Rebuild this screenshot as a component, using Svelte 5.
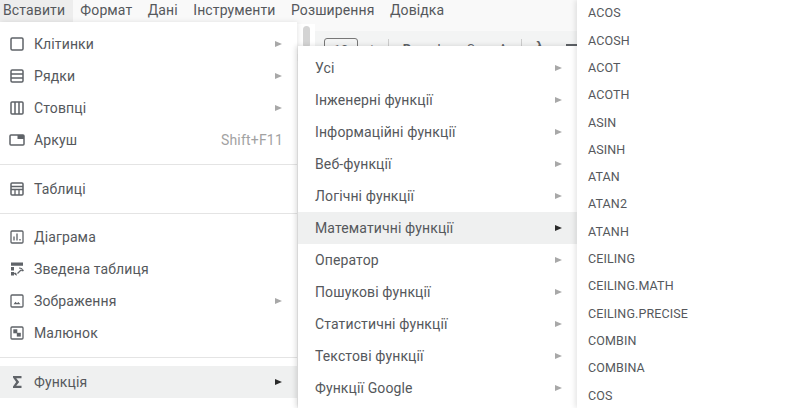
<script>
  const bar = ['Формат', 'Дані', 'Інструменти', 'Розширення', 'Довідка'];
  const groups = [
    [
      { label: 'Клітинки', icon: 'cell', sub: true },
      { label: 'Рядки', icon: 'rows', sub: true },
      { label: 'Стовпці', icon: 'cols', sub: true },
      { label: 'Аркуш', icon: 'sheet', key: 'Shift+F11' }
    ],
    [{ label: 'Таблиці', icon: 'table' }],
    [
      { label: 'Діаграма', icon: 'chart' },
      { label: 'Зведена таблиця', icon: 'pivot' },
      { label: 'Зображення', icon: 'image', sub: true },
      { label: 'Малюнок', icon: 'draw' }
    ],
    [{ label: 'Функція', icon: 'sigma', sub: true, active: true }]
  ];
  const cats = ['Усі', 'Інженерні функції', 'Інформаційні функції', 'Веб-функції', 'Логічні функції', 'Математичні функції', 'Оператор', 'Пошукові функції', 'Статистичні функції', 'Текстові функції', 'Функції Google'];
  const fns = ['ACOS', 'ACOSH', 'ACOT', 'ACOTH', 'ASIN', 'ASINH', 'ATAN', 'ATAN2', 'ATANH', 'CEILING', 'CEILING.MATH', 'CEILING.PRECISE', 'COMBIN', 'COMBINA', 'COS'];
</script>

<div class="page">
  <header class="chrome">
    <nav class="bar">
      <span class="bar-item open">Вставити</span>
      {#each bar as b}<span class="bar-item">{b}</span>{/each}
    </nav>
    <div class="toolbar">
      <span class="size">10</span>
      <span class="tb">+</span><span class="sep"></span>
      <span class="tb b">B</span><span class="tb">I</span><span class="tb">S</span><span class="tb">A</span><span class="sep"></span>
      <span class="tb lambda">λ</span>
      <span class="tb"><span class="borders"></span></span>
    </div>
  </header>

  <div class="scrollbar"><div class="thumb"></div></div>

  <div class="menu main">
    {#each groups as g, i}
      {#if i > 0}<div class="divider"></div>{/if}
      <div class="group">
        {#each g as it}
          <div class="row" class:active={it.active}>
            <svg class="icon" viewBox="0 0 16 16" fill="none" stroke="#5f6368" stroke-width="1.5">
              {#if it.icon === 'cell'}
                <rect x="2" y="2" width="12" height="12" rx="1.200" />
              {:else if it.icon === 'rows'}
                <rect x="2" y="2" width="12" height="12" rx="1.200" /><path d="M2 6h12M2 10h12" />
              {:else if it.icon === 'cols'}
                <rect x="2" y="2" width="12" height="12" rx="1" /><path d="M6 2v12M10 2v12" />
              {:else if it.icon === 'sheet'}
                <rect x="1" y="3" width="14" height="10" rx="1" /><rect x="8.500" y="3" width="6.500" height="4" fill="#5f6368" stroke="none" />
              {:else if it.icon === 'table'}
                <rect x="2" y="2" width="12" height="12" rx="1" /><path d="M2 5.500h12M2 8.500h12M6 8.500V14M10 8.500V14" stroke-width="1.300" />
              {:else if it.icon === 'chart'}
                <rect x="2" y="2" width="12" height="12" rx="1" stroke-width="1.300" /><path d="M5 7.500v4M8 4.500v7M11 10v1.500" stroke-width="1.300" />
              {:else if it.icon === 'pivot'}
                <path d="M2 1.500h12v3.200H2zM2 6h3v3.500H2zM2 11h3v3.500H2z" fill="#5f6368" stroke="none" />
                <path d="M8 14c-1.200 0-1.800-.7-1.800-1.800M6.200 12l-1 1M6.200 12l1 1M10 7c2.200 0 3.500.9 3.500 2.800M13.500 10l-1-1M13.500 10l1-1M12 9l-3.500 3.500" stroke-width="1.200" />
              {:else if it.icon === 'image'}
                <rect x="2" y="2" width="12" height="12" rx="1" stroke-width="1.300" /><path d="M4.500 11.200l2-2.400 1.500 1.500 1.300-1.200 2.200 2.100z" fill="#5f6368" stroke="none" />
              {:else if it.icon === 'draw'}
                <rect x="2" y="2" width="12" height="12" rx="1" stroke-width="1.300" /><rect x="4.300" y="4.300" width="4" height="4" fill="#5f6368" stroke="none" /><rect x="7.800" y="7.800" width="4" height="3.800" fill="#5f6368" stroke="none" />
              {:else if it.icon === 'sigma'}
                <path d="M4 2h8.500v2.200H7.200L10.200 8l-3 3.800h5.300V14H4v-1.600L7.200 8 4 3.600z" fill="#5f6368" stroke="none" />
              {/if}
            </svg>
            <span class="label">{it.label}</span>
            {#if it.key}<span class="key">{it.key}</span>{/if}
            {#if it.sub}<span class="arrow"></span>{/if}
          </div>
        {/each}
      </div>
    {/each}
  </div>

  <div class="menu second">
    {#each cats as c, i}
      <div class="row" class:active={i === 5}>
        <span class="label">{c}</span><span class="arrow"></span>
      </div>
    {/each}
  </div>

  <div class="menu third">
    {#each fns as f}<div class="fn">{f}</div>{/each}
  </div>
</div>

<style>
  :global(body) { margin: 0; }
  .page {
    position: relative;
    width: 791px;
    height: 408px;
    overflow: hidden;
    background: #fff;
    font-family: Roboto, "Noto Sans", sans-serif;
    color: #55585c;
    font-size: 14px;
    letter-spacing: 0.12px;
  }
  .chrome { background: #f9f9f9; }
  .bar {
    display: flex;
    height: 31px;
    align-items: flex-start;
  }
  .bar-item { padding: 0 7.700px; line-height: 21px; }
  .bar-item.open { background: #ededed; padding: 0 7.500px 0 3px; height: 22px; }
  .toolbar {
    display: flex;
    align-items: flex-start;
    margin-left: 315px;
    height: 30px;
    background: #f3f4f4;
    padding: 7px 0 0 9px;
    box-sizing: border-box;
    color: #5f6368;
    font-size: 13px;
  }
  .size {
    border: 1px solid #777;
    border-radius: 3px;
    width: 34px;
    height: 20px;
    box-sizing: border-box;
    text-align: center;
    padding-top: 3px;
    margin-right: -2px;
  }
  .tb { width: 24px; margin: 0 4px; padding-top: 3px; text-align: center; flex: none; }
  .tb.lambda { padding-top: 0; font-size: 15px; font-weight: 500; }
  .borders { display: block; width: 13px; height: 8px; margin: 3px auto 0; border-top: 2px solid #5f6368; }
  .sep { width: 1px; height: 14px; background: #ccc; margin: 1px 2px 0; flex: none; }
  .sep:nth-child(3) { margin-left: 0; }
  .b { font-weight: 700; }
  .scrollbar {
    position: absolute;
    left: 296px;
    top: 24px;
    width: 19px;
    height: 30px;
    background: #fff;
  }
  .thumb {
    width: 7px;
    height: 22px;
    margin: 2px 0 0 7px;
    border-radius: 4px;
    background: #d4d4d4;
  }
  .menu {
    position: absolute;
    background: #fff;
    box-sizing: border-box;
  }
  .main {
    left: 0;
    top: 22px;
    width: 297px;
    height: 386px;
    padding: 6px 0 0;
    box-shadow: 1px 0 5px rgba(0, 0, 0, 0.10);
  }
  .second {
    left: 298px;
    top: 46px;
    width: 279px;
    height: 362px;
    padding: 6px 0 0;
    box-shadow: -2px 0 5px rgba(0, 0, 0, 0.14);
  }
  .third {
    left: 577px;
    top: 0;
    width: 214px;
    height: 408px;
    box-shadow: -2px 0 5px rgba(0, 0, 0, 0.10);
  }
  .row {
    display: flex;
    align-items: center;
    height: 32px;
    padding: 0 14px 0 9px;
  }
  .second .row { padding: 0 14px 0 17px; }
  .row.active { background: #eff0f0; }
  .icon { width: 16px; height: 16px; margin-right: 9px; flex: none; }
  .label { flex: 1; }
  .key { color: #a2a2a2; letter-spacing: 0.2px; }
  .arrow {
    width: 0;
    height: 0;
    border-left: 7px solid #a8a8a8;
    border-top: 3.500px solid transparent;
    border-bottom: 3.500px solid transparent;
    margin-right: 1px;
  }
  .active .arrow { border-left-color: #2a2a2a; }
  .divider { height: 1px; background: #e4e4e4; margin: 8px 0 7.500px; }
  .group { display: flex; flex-direction: column; }
  .fn {
    height: 27.300px;
    line-height: 27.300px;
    padding-left: 11px;
    font-size: 12.500px;
    letter-spacing: 0.12px;
  }
  .fn:first-child { margin-top: -0.650px; }
</style>
